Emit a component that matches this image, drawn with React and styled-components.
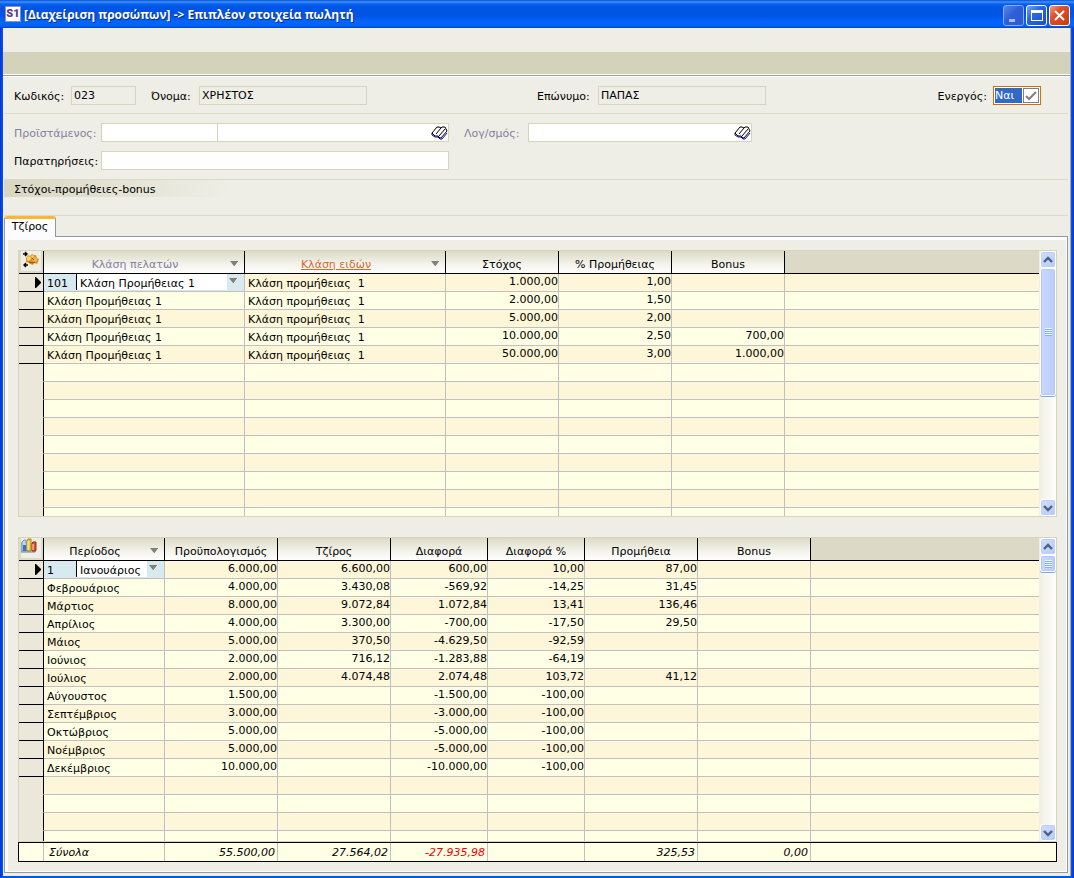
import React, { useState } from 'react';
import styled, { createGlobalStyle, css } from 'styled-components';

const CUSTOMER_CLASS = 'Κλάση Προμήθειας 1';
const ITEM_CLASS = 'Κλάση προμήθειας  1';

const targetColumns = [
  { label: 'Κλάση πελατών', width: 201, arrow: true, muted: true },
  { label: 'Κλάση ειδών', width: 201, arrow: true, link: true },
  { label: 'Στόχος', width: 113, numeric: true },
  { label: '% Προμήθειας', width: 113, numeric: true },
  { label: 'Bonus', width: 113, numeric: true },
];

const targetRows = [
  [CUSTOMER_CLASS, ITEM_CLASS, '1.000,00', '1,00', ''],
  [CUSTOMER_CLASS, ITEM_CLASS, '2.000,00', '1,50', ''],
  [CUSTOMER_CLASS, ITEM_CLASS, '5.000,00', '2,00', ''],
  [CUSTOMER_CLASS, ITEM_CLASS, '10.000,00', '2,50', '700,00'],
  [CUSTOMER_CLASS, ITEM_CLASS, '50.000,00', '3,00', '1.000,00'],
];

const periodColumns = [
  { label: 'Περίοδος', width: 121, arrow: true },
  { label: 'Προϋπολογισμός', width: 113, numeric: true },
  { label: 'Τζίρος', width: 113, numeric: true },
  { label: 'Διαφορά', width: 97, numeric: true },
  { label: 'Διαφορά %', width: 97, numeric: true },
  { label: 'Προμήθεια', width: 113, numeric: true },
  { label: 'Bonus', width: 113, numeric: true },
];

const periodRows = [
  ['Ιανουάριος', '6.000,00', '6.600,00', '600,00', '10,00', '87,00', ''],
  ['Φεβρουάριος', '4.000,00', '3.430,08', '-569,92', '-14,25', '31,45', ''],
  ['Μάρτιος', '8.000,00', '9.072,84', '1.072,84', '13,41', '136,46', ''],
  ['Απρίλιος', '4.000,00', '3.300,00', '-700,00', '-17,50', '29,50', ''],
  ['Μάιος', '5.000,00', '370,50', '-4.629,50', '-92,59', '', ''],
  ['Ιούνιος', '2.000,00', '716,12', '-1.283,88', '-64,19', '', ''],
  ['Ιούλιος', '2.000,00', '4.074,48', '2.074,48', '103,72', '41,12', ''],
  ['Αύγουστος', '1.500,00', '', '-1.500,00', '-100,00', '', ''],
  ['Σεπτέμβριος', '3.000,00', '', '-3.000,00', '-100,00', '', ''],
  ['Οκτώβριος', '5.000,00', '', '-5.000,00', '-100,00', '', ''],
  ['Νοέμβριος', '5.000,00', '', '-5.000,00', '-100,00', '', ''],
  ['Δεκέμβριος', '10.000,00', '', '-10.000,00', '-100,00', '', ''],
];

const totals = ['Σύνολα', '55.500,00', '27.564,02', '-27.935,98', '', '325,53', '0,00'];

const BookIcon = () => (
  <svg width="17" height="14" viewBox="0 0 17 14" aria-hidden="true">
    <path d="M1 7l5-6h2l2 1 2-1h2l2 4-6 7H9L7 10H4z" fill="#fff" />
    <path d="M1 9l3 2h3l2 2h2l5-6" fill="none" stroke="#0000c8" />
    <path d="M1 7l5-6h2l2 1 1-1h3l2 4-6 7H9L7 10H4L1 7v2M10 2L5 8" fill="none" stroke="#000" />
    <path d="M8 10l6-7" fill="none" stroke="#000" />
  </svg>
);

const GearIcon = () => (
  <svg width="20" height="20" viewBox="0 0 20 20" aria-hidden="true">
    <path d="M5 7l2-3 2 1 2-2 2 1h2l1 3 2 1-1 3-1 2-3-1-1 2-3-1-1-1-3-1z" fill="#d9922a" />
    <path d="M6 6l3-1 1 3-2 2-2-1zM11 4l2 1-1 2-2-1z" fill="#f9d36b" />
    <path d="M13 6l3 1v3l-3 1-2-2z" fill="#efb545" />
    <path d="M11 7l2 2M8 11l4 1 2-1" stroke="#8c4d12" fill="none" />
    <path d="M2 3h4M4 1l2 2-2 2M7 14H3M5 12l-2 2 2 2" stroke="#000" strokeWidth="1.4" fill="none" />
  </svg>
);

const ChartIcon = () => (
  <svg width="20" height="20" viewBox="0 0 20 20" aria-hidden="true">
    <path d="M0 5v9h14l1-2" fill="none" stroke="#6c7c94" />
    <path d="M1 4l2-2h2v3h1v8H1z" fill="#bcd6f2" stroke="#6f93c4" />
    <path d="M2 7h3v6H2z" fill="#3474c4" />
    <path d="M6 3l1-2h3v12H6z" fill="#f0cc48" stroke="#a67c16" />
    <path d="M11 5l1-1h3v8l-1 1h-3z" fill="#d9532c" stroke="#9c2c14" />
    <path d="M7 3v9M12 6v6" stroke="#fff3c0" />
  </svg>
);

const ArrowDown = () => (
  <svg width="10" height="6" viewBox="0 0 10 6" aria-hidden="true">
    <path d="M0 0h9L5 5H4z" fill="#808080" />
    <path d="M9 0 5 5" stroke="#fff" fill="none" />
  </svg>
);

const Chevron = ({ down }) => (
  <svg width="10" height="8" viewBox="0 0 10 8" aria-hidden="true">
    <path d={down ? 'M1 2l4 4 4-4' : 'M1 6l4-4 4 4'} fill="none" stroke="#4d6185" strokeWidth="2.4" />
  </svg>
);

const RowMarker = () => (
  <svg width="7" height="11" viewBox="0 0 7 11" aria-hidden="true">
    <path d="M0 0h1l5 5v1l-5 5H0z" fill="#000" />
  </svg>
);

const Scroller = ({ thumb }) => (
  <ScrollTrack>
    <ScrollButton type="button" aria-label="Πάνω"><Chevron /></ScrollButton>
    <ScrollThumb $size={thumb}>
      <Grip />
    </ScrollThumb>
    <ScrollSpace />
    <ScrollButton type="button" aria-label="Κάτω"><Chevron down /></ScrollButton>
  </ScrollTrack>
);

const DataGrid = ({ icon, columns, rows, code, blanks, label, inputWidth }) => {
  const [current, setCurrent] = useState(rows[0][0]);

  return (
    <Table aria-label={label}>
      <colgroup>
        <Col $width={25} />
        {columns.map((column) => <Col key={column.label} $width={column.width} />)}
        <col />
      </colgroup>
      <thead>
        <tr>
          <CornerHead><CornerButton type="button" aria-label={label}>{icon}</CornerButton></CornerHead>
          {columns.map((column) => (
            <Head key={column.label} scope="col">
              <HeadInner>
                {column.link
                  ? <HeadLink href="#items">{column.label}</HeadLink>
                  : <HeadText $muted={column.muted}>{column.label}</HeadText>}
                {column.arrow && <HeadArrow type="button" aria-label={column.label}><ArrowDown /></HeadArrow>}
              </HeadInner>
            </Head>
          ))}
          <FillerHead />
        </tr>
      </thead>
      <tbody>
        {rows.map((row, index) => (
          <Row key={index}>
            <Gutter $filled>{index === 0 && <RowMarker />}</Gutter>
            {row.map((value, i) => {
              if (index === 0 && i === 0) {
                return (
                  <Cell key={i} $active>
                    <Editor>
                      <EditorCode>{code}</EditorCode>
                      <EditorInput
                        $width={inputWidth}
                        aria-label={columns[0].label}
                        value={current}
                        onChange={(e) => setCurrent(e.target.value)}
                      />
                      <ArrowButton type="button" aria-label="Επιλογή"><ArrowDown /></ArrowButton>
                    </Editor>
                  </Cell>
                );
              }
              return <Cell key={i} $numeric={columns[i].numeric}>{value}</Cell>;
            })}
            <Cell $last />
          </Row>
        ))}
        {Array.from({ length: blanks }, (_, index) => (
          <Row key={`blank-${index}`}>
            <Gutter />
            {columns.map((column) => <Cell key={column.label} />)}
            <Cell $last />
          </Row>
        ))}
      </tbody>
    </Table>
  );
};

const App = () => {
  const [active, setActive] = useState(true);

  return (
    <>
      <GlobalStyle />
      <Window>
        <TitleBar>
          <AppLogo>S1</AppLogo>
          <Title>[Διαχείριση προσώπων] -&gt; Επιπλέον στοιχεία πωλητή</Title>
          <WindowButton type="button" aria-label="Ελαχιστοποίηση" $dim>
            <svg width="19" height="19" viewBox="0 0 19 19"><path d="M5 13h6v3H5z" fill="#a9bdf0" /></svg>
          </WindowButton>
          <WindowButton type="button" aria-label="Μεγιστοποίηση">
            <svg width="19" height="19" viewBox="0 0 19 19">
              <path d="M4 4h12v11H4zM5 7v7h10V7z" fill="#fff" fillRule="evenodd" />
            </svg>
          </WindowButton>
          <WindowButton type="button" aria-label="Κλείσιμο" $danger>
            <svg width="19" height="19" viewBox="0 0 19 19"><path d="M5 5l9 9M14 5l-9 9" stroke="#fff" strokeWidth="2" /></svg>
          </WindowButton>
        </TitleBar>
        <Body>
          <MenuStrip />
          <ToolStrip />
          <IdentityRow>
            <Label htmlFor="code" $width={57}>Κωδικός:</Label>
            <Field $width={65}><Input id="code" defaultValue="023" readOnly /></Field>
            <Label htmlFor="name" $width={48} $gap={15}>Όνομα:</Label>
            <Field $width={168}><Input id="name" defaultValue="ΧΡΗΣΤΟΣ" readOnly /></Field>
            <Label htmlFor="surname" $width={61} $gap={170}>Επώνυμο:</Label>
            <Field $width={168}><Input id="surname" defaultValue="ΠΑΠΑΣ" readOnly /></Field>
            <ActiveGroup>
              <Label htmlFor="active">Ενεργός:</Label>
              <ToggleField>
                <ToggleText>{active ? 'Ναι' : 'Όχι'}</ToggleText>
                <Toggle id="active" type="checkbox" checked={active} onChange={(e) => setActive(e.target.checked)} />
                <ToggleMark viewBox="0 0 15 15" aria-hidden="true">
                  {active && <path d="M3 8l3 3 7-7" fill="none" stroke="#808080" strokeWidth="2" />}
                </ToggleMark>
              </ToggleField>
            </ActiveGroup>
          </IdentityRow>
          <Details>
            <Line>
              <Label htmlFor="manager" $width={87} $muted>Προϊστάμενος:</Label>
              <Field $width={348} $editable>
                <CodeInput id="manager" />
                <Input aria-label="Όνομα προϊσταμένου" />
                <LookupButton type="button" aria-label="Αναζήτηση προϊσταμένου"><BookIcon /></LookupButton>
              </Field>
              <Label htmlFor="account" $width={64} $gap={15} $muted>Λογ/σμός:</Label>
              <Field $width={224} $editable>
                <Input id="account" />
                <LookupButton type="button" aria-label="Αναζήτηση λογαριασμού"><BookIcon /></LookupButton>
              </Field>
            </Line>
            <Line>
              <Label htmlFor="notes" $width={87}>Παρατηρήσεις:</Label>
              <Field $width={348} $editable><Input id="notes" /></Field>
            </Line>
          </Details>
          <SectionTitle>Στόχοι-προμήθειες-bonus</SectionTitle>
          <Tabs role="tablist">
            <Tab type="button" role="tab" aria-selected="true">Τζίρος</Tab>
            <TabsRest />
          </Tabs>
          <Panel role="tabpanel">
            <GridFrame $height={267}>
              <GridView>
                <DataGrid
                  label="Στόχοι"
                  icon={<GearIcon />}
                  columns={targetColumns}
                  rows={targetRows}
                  code="101"
                  blanks={9}
                  inputWidth={151}
                />
              </GridView>
              <Scroller thumb={128} />
            </GridFrame>
            <div>
              <GridFrame $height={305}>
                <GridView>
                  <DataGrid
                    label="Περίοδοι"
                    icon={<ChartIcon />}
                    columns={periodColumns}
                    rows={periodRows}
                    code="1"
                    blanks={4}
                    inputWidth={71}
                  />
                </GridView>
                <Scroller thumb={17} />
              </GridFrame>
              <TotalsFrame>
                <Table aria-label="Σύνολα">
                  <colgroup>
                    <Col $width={25} />
                    {periodColumns.map((column) => <Col key={column.label} $width={column.width} />)}
                    <col />
                  </colgroup>
                  <tbody>
                    <tr>
                      <TotalCell />
                      {totals.map((value, i) => (
                        <TotalCell key={i} $numeric={i > 0} $negative={value.startsWith('-')}>{value}</TotalCell>
                      ))}
                      <TotalCell $last />
                    </tr>
                  </tbody>
                </Table>
              </TotalsFrame>
            </div>
          </Panel>
        </Body>
      </Window>
    </>
  );
};

const GlobalStyle = createGlobalStyle`
  * {
    box-sizing: border-box;
  }

  body {
    margin: 0;
    background: #0054e3;
    color: #000;
    font: 11px/14px Verdana, "DejaVu Sans", sans-serif;
  }

  button, input {
    margin: 0;
    padding: 0;
    border: 0;
    border-radius: 0;
    background: none;
    color: inherit;
    font: inherit;
    outline: none;
  }

  svg {
    display: block;
  }
`;

const Window = styled.main`
  display: flex;
  flex-direction: column;
  min-height: 100vh;
  min-width: 960px;
  padding: 0 3px 2px;
  background: linear-gradient(90deg, #0831d9, #0058ee 3px, #0058ee calc(100% - 3px), #0831d9);
`;

const TitleBar = styled.header`
  display: flex;
  align-items: center;
  gap: 2px;
  height: 28px;
  margin: 0 -3px;
  padding: 2px 4px 0 5px;
  background: linear-gradient(#0a4fd0 0, #3c90ff 2px, #0560ee 4px, #0054e3 8px, #0055e5 16px, #0066ff 22px, #0062f5 26px, #0046c8 28px);
`;

const AppLogo = styled.span`
  width: 16px;
  height: 16px;
  margin-bottom: 2px;
  border: 1px solid #8c8cc0;
  background: #fff;
  color: #5a3a8c;
  font: 900 11px/14px Roboto, "Liberation Sans", sans-serif;
  text-align: center;
`;

const Title = styled.h1`
  flex: 1;
  margin: 0 0 0 1px;
  color: #fff;
  font: bold 12px/18px "Trebuchet MS", "Open Sans", "Noto Sans", sans-serif;
  text-shadow: 1px 1px #0a2a86;
  white-space: nowrap;
`;

const WindowButton = styled.button`
  display: grid;
  place-items: center;
  width: 21px;
  height: 21px;
  border: 1px solid ${({ $dim }) => ($dim ? '#8ba9ee' : '#fff')};
  border-radius: 3px;
  background: ${({ $danger, $dim }) => {
    if ($danger) return 'linear-gradient(135deg, #f0a088, #e0502c 35%, #c83c10)';
    return $dim
      ? 'linear-gradient(135deg, #5c86e8, #2c5fd8 45%, #2a5cd4)'
      : 'linear-gradient(135deg, #7ca4f4, #2c64e4 40%, #1c50d0)';
  }};
`;

const Body = styled.div`
  flex: 1;
  display: flex;
  flex-direction: column;
  padding: 0 2px 3px 1px;
  border-right: 1px solid #aca899;
  background: #efeee6;
`;

const MenuStrip = styled.nav`
  height: 24px;
  margin: 0 -2px 0 -1px;
`;

const ToolStrip = styled.div`
  height: 24px;
  margin: 0 -2px 0 -1px;
  background: #d5d2bb;
  border-bottom: 1px solid #9d9c99;
  box-shadow: inset 0 -1px #fff, 0 1px #fff;
`;

const IdentityRow = styled.div`
  display: flex;
  align-items: flex-start;
  height: 38px;
  padding: 10px 27px 0 10px;
  border-bottom: 1px solid #dcdbc8;
`;

const Label = styled.label`
  flex: none;
  width: ${({ $width }) => ($width ? `${$width}px` : 'auto')};
  margin-left: ${({ $gap }) => $gap || 0}px;
  padding-top: 4px;
  color: ${({ $muted }) => ($muted ? '#8480a0' : '#000')};
  white-space: nowrap;
`;

const Field = styled.div`
  display: flex;
  width: ${({ $width }) => $width}px;
  height: 19px;
  border: 1px solid #d6d5bc;
  background: ${({ $editable }) => ($editable ? '#fff' : 'transparent')};
`;

const Input = styled.input`
  flex: 1;
  min-width: 0;
  padding: 0 2px;
`;

const CodeInput = styled.input`
  width: 116px;
  padding: 0 2px;
  border-right: 1px solid #d6d5bc;
`;

const LookupButton = styled.button`
  width: 17px;
`;

const ActiveGroup = styled.div`
  display: flex;
  gap: 6px;
  margin-left: auto;
`;

const ToggleField = styled.div`
  display: grid;
  grid-template-columns: 29px 17px;
  height: 19px;
  border: 1px solid #d0700c;
  background: #fff;
`;

const ToggleText = styled.span`
  margin: 1px;
  background: #316ac5;
  color: #fff;
  line-height: 15px;
`;

const Toggle = styled.input`
  grid-area: 1 / 2;
  appearance: none;
  width: 16px;
  height: 15px;
  margin: 1px 0;
  border: 1px solid #808080;
  background: #fff;
`;

const ToggleMark = styled.svg`
  grid-area: 1 / 2;
  width: 15px;
  height: 15px;
  margin-top: 1px;
  pointer-events: none;
`;

const Details = styled.div`
  display: flex;
  flex-direction: column;
  gap: 9px;
  height: 66px;
  padding: 9px 10px 0;
  border-bottom: 1px solid #dcdbc8;
`;

const Line = styled.div`
  display: flex;
`;

const SectionTitle = styled.h2`
  margin: 0 0 18px;
  padding: 3px 10px 0;
  background: linear-gradient(90deg, #d9d7c2, #efeee6 228px);
  font: inherit;
`;

const Tabs = styled.div`
  display: flex;
  height: 22px;
  border-top: 1px solid #dcdbc8;
`;

const Tab = styled.button`
  width: 52px;
  padding-bottom: 2px;
  border: 1px solid #919b9c;
  border-top: 3px solid #ffb733;
  border-bottom: 0;
  border-radius: 3px 3px 0 0;
  background: #fcfcfe;
  text-align: center;
`;

const TabsRest = styled.div`
  flex: 1;
  border-bottom: 1px solid #919b9c;
`;

const Panel = styled.section`
  flex: 1;
  display: flex;
  flex-direction: column;
  gap: 20px;
  padding: 13px 10px 8px 13px;
  border: 1px solid #919b9c;
  border-top: 0;
  background: #efeee6;
  box-shadow: inset 3px 3px #fcfcfe, inset -1px -1px #fcfcfe;
`;

const GridFrame = styled.div`
  display: flex;
  height: ${({ $height }) => $height}px;
  border: 1px solid #d6d5bc;
`;

const GridView = styled.div`
  flex: 1;
  min-width: 0;
  overflow: hidden;
`;

const Table = styled.table`
  width: 100%;
  table-layout: fixed;
  border-collapse: separate;
  border-spacing: 0;
`;

const Col = styled.col`
  width: ${({ $width }) => $width}px;
`;

const headCell = css`
  height: 23px;
  padding: 0;
  border-right: 1px solid #000;
  border-bottom: 1px solid #000;
  font-weight: normal;
`;

const CornerHead = styled.th`
  ${headCell}
  background: #dcdac6;
  vertical-align: top;
`;

const CornerButton = styled.button`
  display: block;
  width: 20px;
  height: 20px;
  margin-left: 2px;
  background: #efeee6;
`;

const Head = styled.th`
  ${headCell}
  background: linear-gradient(#dcdac6, #f4f3ec 60%, #fefefe);
`;

const FillerHead = styled.th`
  ${headCell}
  border-right: 0;
  background: #dcdac6;
`;

const HeadInner = styled.div`
  display: flex;
  align-items: center;
  padding-top: 4px;
  line-height: 17px;
`;

const HeadText = styled.span`
  flex: 1;
  color: ${({ $muted }) => ($muted ? '#8480a0' : '#000')};
  white-space: nowrap;
`;

const HeadLink = styled.a`
  flex: 1;
  color: #d5682c;
`;

const ArrowButton = styled.button`
  display: grid;
  place-items: center;
  width: 14px;
  height: 14px;
`;

const HeadArrow = styled(ArrowButton)`
  width: 18px;
`;

const Row = styled.tr`
  background: #fef6d8;

  &:nth-child(even) {
    background: #ffffe6;
  }
`;

const Gutter = styled.td`
  height: 18px;
  padding: 0 0 0 16px;
  border-right: 1px solid #000;
  border-bottom: 1px solid ${({ $filled }) => ($filled ? '#000' : '#ebe8d9')};
  background: #ebe8d9;
`;

const Cell = styled.td`
  height: 18px;
  padding: ${({ $numeric, $active }) => {
    if ($active) return 0;
    return $numeric ? '1px 0 0' : '3px 0 0 3px';
  }};
  border-right: ${({ $last }) => ($last ? 0 : '1px solid #c0c0c0')};
  border-bottom: 1px solid #c0c0c0;
  background: ${({ $active }) => ($active ? '#d8e9f0' : 'transparent')};
  text-align: ${({ $numeric }) => ($numeric ? 'right' : 'left')};
  vertical-align: top;
  white-space: pre;
`;

const Editor = styled.div`
  display: flex;
  height: 17px;
`;

const EditorCode = styled.span`
  width: 32px;
  padding: 3px 0 0 3px;
`;

const EditorInput = styled.input`
  width: ${({ $width }) => $width}px;
  height: 16px;
  padding: 2px 0 0 3px;
  border-left: 1px solid #000;
  background: #fff;
`;

const ScrollTrack = styled.div`
  display: flex;
  flex-direction: column;
  width: 17px;
  padding-left: 1px;
  background: linear-gradient(90deg, #f0efe6, #fefefb);
`;

const ScrollButton = styled.button`
  display: grid;
  place-items: center;
  height: 17px;
  border: 1px solid #fff;
  border-radius: 3px;
  background: linear-gradient(135deg, #d0defc, #b5cbf8);
  box-shadow: inset 0 0 0 1px #bccff8, inset -1px -1px #9cb4e8;
`;

const ScrollThumb = styled.div`
  display: grid;
  place-items: center;
  height: ${({ $size }) => $size}px;
  border: 1px solid #fff;
  border-radius: 3px;
  background: linear-gradient(90deg, #cad8fc, #b9cdfb);
  box-shadow: inset 0 0 0 1px #b4c8f6, 0 1px #86a4dc;
`;

const Grip = styled.span`
  width: 7px;
  height: 8px;
  background: repeating-linear-gradient(#eef4fe 0 1px, #8cb0f8 1px 2px);
`;

const ScrollSpace = styled.div`
  flex: 1;
`;

const TotalsFrame = styled.div`
  border: 1px solid #000;
  background: #ffffe6;
`;

const TotalCell = styled.td`
  height: 18px;
  padding: ${({ $numeric }) => ($numeric ? '1px 2px 0 0' : '1px 0 0 5px')};
  border-right: ${({ $last }) => ($last ? 0 : '1px solid #c0c0c0')};
  color: ${({ $negative }) => ($negative ? '#f00000' : '#000')};
  font-style: italic;
  text-align: ${({ $numeric }) => ($numeric ? 'right' : 'left')};
`;

export default App;
